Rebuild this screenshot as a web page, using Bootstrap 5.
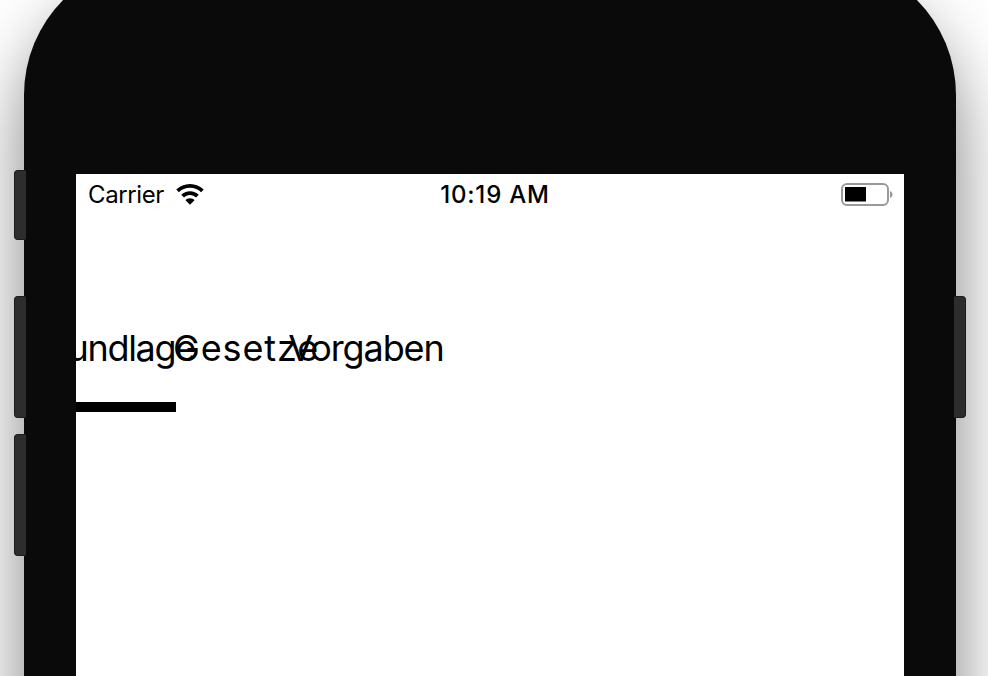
<!DOCTYPE html>
<html lang="de">
<head>
    <meta charset="UTF-8">
    <meta name="viewport" content="width=device-width, initial-scale=1.0">
    <title>Simulator</title>
    <link href="https://cdn.jsdelivr.net/npm/bootstrap@5.3.0/dist/css/bootstrap.min.css" rel="stylesheet">
    <style>
        html, body { height: 100%; overflow: hidden; background: #fff; }
        body { font-family: Inter, "Liberation Sans", sans-serif; color: #000; }
        .phone-shell { position: relative; width: 932px; height: 900px; margin: -40px 0 0 24px; padding: 214px 52px 0; background: #0a0a0a; border-radius: 135px; box-shadow: 0 40px 70px rgba(0,0,0,.5); }
        .phone-screen { height: 100%; background: #fff; overflow: hidden; }
        .side-key { position: absolute; width: 12px; background: #2d2d2d; border: 1px solid #1c1c1c; }
        .side-key.on-left { left: -10px; border-radius: 4px 0 0 4px; border-right: 0; }
        .side-key.on-right { right: -10px; border-radius: 0 4px 4px 0; border-left: 0; }
        .key-a { top: 210px; height: 70px; }
        .key-b { top: 336px; height: 122px; }
        .key-c { top: 474px; height: 122px; }
        .status-row { height: 42px; padding: 0 11px 0 12px; font-size: 24px; line-height: 42px; }
        .status-side { width: 340px; }
        .carrier-name { letter-spacing: -.4px; }
        .status-time { font-weight: 500; font-size: 24px; letter-spacing: .8px; margin-left: 9px; }
        .wifi-glyph { width: 28px; height: 21px; margin-left: 12px; margin-top: -2px; }
        .batt-glyph { width: 52px; height: 24px; }
        .tab-row { margin-top: 99px; }
        .tab-cell { flex: 0 0 100px; min-width: 0; margin-right: 20px; height: 66px; display: flex; align-items: center; justify-content: center; white-space: nowrap; font-size: 36px; line-height: 64px; color: #000; text-decoration: none; }
        .tab-first { justify-content: flex-end; letter-spacing: -1.3px; }
        .tab-first span { margin-right: -19px; }
        .tab-mid { letter-spacing: .9px; }
        .tab-last { letter-spacing: -1.1px; }
        .tab-line { width: 100px; height: 10px; background: #000; margin-top: 21px; }
    </style>
</head>
<body>
    <div class="phone-shell">
        <div class="side-key on-left key-a"></div>
        <div class="side-key on-left key-b"></div>
        <div class="side-key on-left key-c"></div>
        <div class="side-key on-right key-b"></div>

        <div class="phone-screen">
            <div class="status-row d-flex justify-content-between align-items-center">
                <div class="status-side d-flex align-items-center">
                    <span class="carrier-name">Carrier</span>
                    <svg class="wifi-glyph" viewBox="0 0 28 21">
                        <path d="M14 0C8.6 0 3.8 2.1.3 5.6l2.6 2.7C5.7 5.5 9.6 3.8 14 3.8s8.300 1.700 11.100 4.500l2.600-2.700C24.200 2.100 19.400 0 14 0z" fill="#000"/>
                        <path d="M14 7.200c-3.400 0-6.500 1.400-8.700 3.600l2.700 2.700c1.500-1.500 3.600-2.500 6-2.500s4.500 1 6 2.500l2.700-2.700c-2.200-2.200-5.300-3.600-8.700-3.600z" fill="#000"/>
                        <path d="M14 14.300c-1.800 0-3.400.7-4.500 1.900L14 20.700l4.500-4.500c-1.100-1.200-2.700-1.900-4.500-1.900z" fill="#000"/>
                    </svg>
                </div>
                <div class="status-time">10:19 AM</div>
                <div class="status-side d-flex justify-content-end">
                    <svg class="batt-glyph" viewBox="0 0 52 24">
                        <rect x="1" y="1" width="46" height="21" rx="5" fill="none" stroke="#999" stroke-width="2"/>
                        <rect x="4" y="4" width="21" height="14.500" fill="#000"/>
                        <path d="M49 8c1.500.5 2.500 1.800 2.500 3.500S50.500 14.500 49 15z" fill="#999"/>
                    </svg>
                </div>
            </div>

            <nav class="tab-row d-flex">
                <a class="tab-cell tab-first" href="#"><span>Grundlage</span></a>
                <a class="tab-cell tab-mid" href="#">Gesetze</a>
                <a class="tab-cell tab-last" href="#">Vorgaben</a>
            </nav>
            <div class="tab-line"></div>
        </div>
    </div>
    <script src="https://cdn.jsdelivr.net/npm/bootstrap@5.3.0/dist/js/bootstrap.bundle.min.js"></script>
</body>
</html>
